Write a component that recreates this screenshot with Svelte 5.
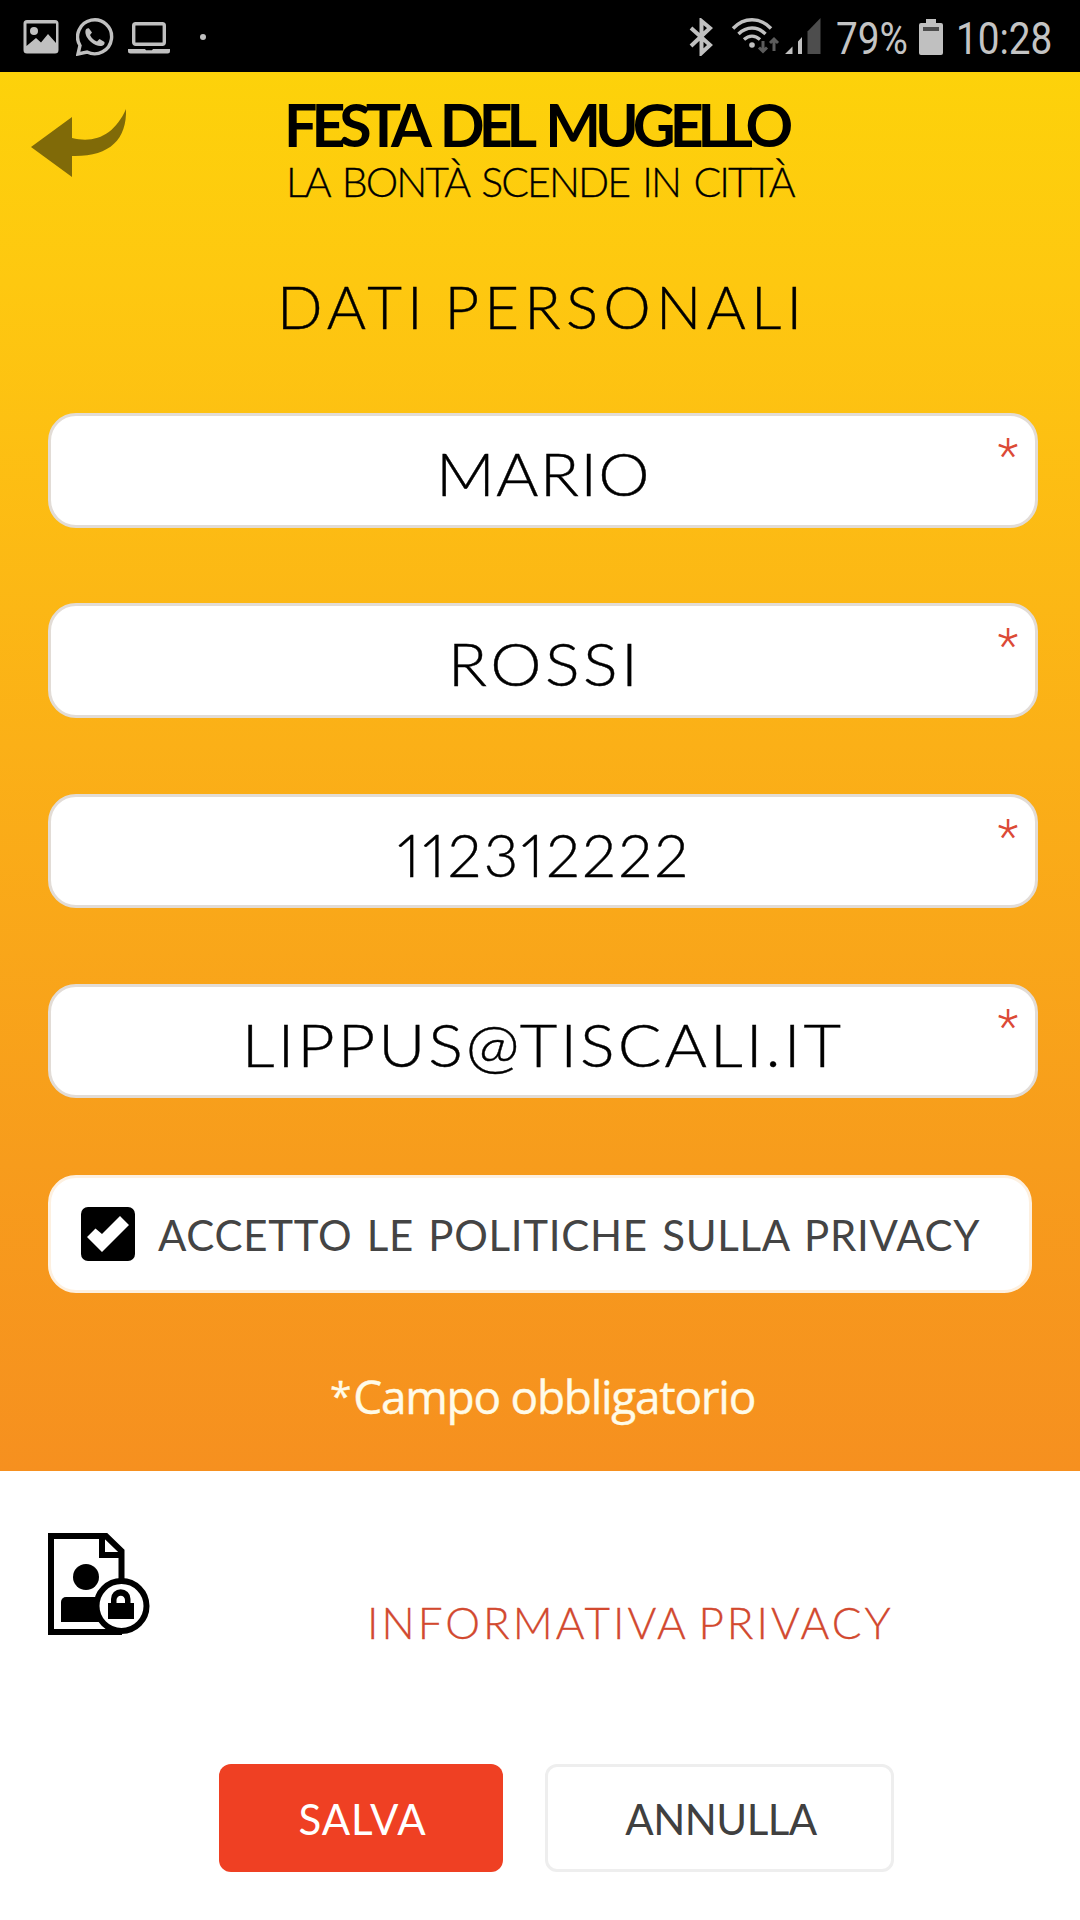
<script>
	let fields = [
		{ name: 'nome', value: 'MARIO' },
		{ name: 'cognome', value: 'ROSSI' },
		{ name: 'telefono', value: '112312222' },
		{ name: 'email', value: 'LIPPUS@TISCALI.IT' }
	];
	let accepted = true;

	function toggle() {
		accepted = !accepted;
	}
</script>

<div class="screen">
	<div class="status">
		<svg class="picture" width="36" height="34" viewBox="0 0 36 34">
			<path fill-rule="evenodd" d="M4 0H32a3.500 3.500 0 0 1 3.500 3.500V30a3.500 3.500 0 0 1-3.500 3.500H4A3.500 3.500 0 0 1 .5 30V3.500A3.500 3.500 0 0 1 4 0ZM3.500 3.500V26L13 18l5 4.500L25 14l8 9V3.500Z" />
			<circle cx="11" cy="11" r="4" />
		</svg>
		<svg class="whatsapp" width="38" height="38" viewBox="0 0 38 38">
			<path class="line" d="M2 36 4 27.500A17 17 0 1 1 11 34Z" />
			<path d="M13 10.500c-1-.5-3 0-3.500 2-.8 4 2 8.500 5.500 11.500s7.500 4.500 10.500 4c2-.3 3.500-2 3-4l-5-3-2.500 2.500c-3-1-5.500-3.500-7-6.500l2-2.500Z" />
		</svg>
		<svg class="laptop" width="42" height="32" viewBox="0 0 42 32">
			<rect class="line" x="5.700" y="1.700" width="30.600" height="20.600" rx="2" />
			<path d="M0 27H17l1 1.200h6L25 27H42v2a2.500 2.500 0 0 1-2.500 2.500h-37A2.500 2.500 0 0 1 0 29Z" />
		</svg>
		<i class="dot"></i>
		<svg class="bluetooth" width="24" height="38" viewBox="0 0 24 38">
			<path class="line thick" d="M2 10 21 27 12.500 35V3L21 10 2 28" />
		</svg>
		<svg class="wifi" width="50" height="38" viewBox="0 0 50 38">
			<path class="line" d="M2 10.500C13-1.200 29-1.200 40 10.500M7.500 16C15.500 8 26.500 8 34.500 16M13 21.500c5-4.500 11-4.500 16 0" />
			<circle cx="21" cy="27" r="2.800" />
			<path class="traffic" d="M32 23V33M28 29.500l4 4 4-4M43 33V21.500M39 25l4-4 4 4" />
		</svg>
		<svg class="signal" width="36" height="36" viewBox="0 0 36 36">
			<path d="M0 36 7.500 28.500V36ZM13 23.500 17 19V36H13Z" />
			<path class="off" d="M22.500 13.500 35.500 0V36H22.500Z" />
		</svg>
		<span class="percent">79%</span>
		<svg class="battery" width="24" height="36" viewBox="0 0 24 36">
			<path d="M7 0H17V4H22a2 2 0 0 1 2 2V34a2 2 0 0 1-2 2H2a2 2 0 0 1-2-2V6A2 2 0 0 1 2 4H7Z" />
			<path class="off" d="M4 8H20V12H4Z" />
		</svg>
		<span class="clock">10:28</span>
	</div>

	<div class="form">
		<header>
			<svg class="back" width="96" height="70" viewBox="0 0 96 70">
				<path d="M0 39 41 9V30C65 36 84 26 95 1 96 32 78 49 41 48V69Z" />
			</svg>
			<div class="brand">
				<h1>FESTA DEL MUGELLO</h1>
				<p>LA BONTÀ SCENDE IN CITTÀ</p>
			</div>
		</header>

		<h2>DATI PERSONALI</h2>

		{#each fields as field}
			<div class="field">
				<span class={field.name}>{field.value}</span>
				<sup>*</sup>
			</div>
		{/each}

		<button class="accept" on:click={toggle}>
			<svg width="54" height="54" viewBox="0 0 54 54">
				<rect width="54" height="54" rx="7" />
				{#if accepted}
					<path d="M6 30 14.500 21.500 21 27 39 9 48 18 21 45Z" />
				{/if}
			</svg>
			<span>ACCETTO LE POLITICHE SULLA PRIVACY</span>
		</button>

		<p class="required"><small>*</small>Campo obbligatorio</p>
	</div>

	<div class="privacy">
		<svg width="102" height="102" viewBox="0 0 102 102">
			<path class="page" d="M73.500 46V18L58 3H3V99H74" />
			<path class="page" d="M54 3V22H73" />
			<circle cx="38" cy="44" r="13" />
			<path d="M13 89V69a5 5 0 0 1 5-5H58V89Z" />
			<circle class="badge" cx="73.500" cy="73" r="25" />
			<path d="M60 70h3V66a9.700 9.700 0 0 1 19.500 0v4H86V86H60ZM68.500 70h8.500V67a4.200 4.200 0 0 0-8.500 0Z" fill-rule="evenodd" />
		</svg>
		<a href="#privacy">INFORMATIVA PRIVACY</a>
	</div>

	<div class="actions">
		<button class="save"><span>SALVA</span></button>
		<button class="cancel"><span>ANNULLA</span></button>
	</div>
</div>

<style>
	:global(body) {
		background: #fff;
	}

	.screen {
		width: 1080px;
		height: 1920px;
		overflow: hidden;
		font-family: Lato, "Liberation Sans", sans-serif;
		font-weight: 300;
		color: #000;
	}

	h1, h2, p {
		margin: 0;
		white-space: nowrap;
	}

	button {
		font: inherit;
		box-sizing: border-box;
		padding: 0;
	}

	span {
		white-space: nowrap;
	}

	/* status bar */
	.status {
		display: flex;
		align-items: flex-start;
		height: 72px;
		box-sizing: border-box;
		padding: 18px 0 0 23px;
		background: #000;
		color: #c4c4c4;
		font-family: Roboto, sans-serif;
		font-weight: 400;
		font-size: 45px;
		line-height: 38px;
	}

	.status svg {
		flex: none;
		fill: #c0c0c0;
	}

	.status .line {
		fill: none;
		stroke: #c0c0c0;
		stroke-width: 3.400;
	}

	.status .thick {
		stroke-width: 4;
	}

	.status .traffic {
		fill: none;
		stroke: #5c5c5c;
		stroke-width: 3;
	}

	.status .off {
		fill: #4d4d4d;
	}

	.picture { margin: 2px 17px 0 0; }
	.whatsapp { margin-right: 14px; }
	.laptop { margin: 4px 30px 0 0; }

	.dot {
		width: 6px;
		height: 6px;
		margin: 16px 483px 0 0;
		border-radius: 50%;
		background: #c0c0c0;
	}

	.bluetooth { margin-right: 18px; }
	.wifi { margin-right: 4px; }
	.signal { margin-right: 15px; }
	.battery { margin: 1px 13px 0 0; }

	.percent,
	.clock {
		transform: scaleX(.86);
		transform-origin: 0 0;
		padding-top: 2px;
	}

	.percent { width: 83px; }

	/* yellow part */
	.form {
		display: flex;
		flex-direction: column;
		height: 1399px;
		box-sizing: border-box;
		padding: 0 42px 0 48px;
		background: linear-gradient(#fdd20a, #fec810 15%, #fbb017 48%, #f79c1c 78%, #f6901f);
	}

	header {
		display: flex;
		height: 197px;
		margin-left: -17px;
	}

	.back {
		margin: 36px 159px 0 0;
		fill: #806a08;
	}

	h1 {
		margin: 16px 0 0 -2px;
		font-size: 59px;
		line-height: 74px;
		font-weight: 700;
		letter-spacing: -6px;
		word-spacing: 7.500px;
	}

	.brand p {
		font-size: 41px;
		line-height: 40px;
		letter-spacing: -1.900px;
		word-spacing: 4px;
		-webkit-text-stroke: .3px #000;
	}

	h2 {
		height: 144px;
		padding-left: 229px;
		font-size: 60px;
		line-height: 74px;
		font-weight: 300;
		letter-spacing: 5.200px;
		word-spacing: -5px;
		-webkit-text-stroke: .4px #000;
	}

	.field {
		position: relative;
		display: flex;
		justify-content: center;
		height: 114.500px;
		margin-bottom: 75.800px;
		box-sizing: border-box;
		border: 3px solid #e2dcd6;
		border-radius: 28px;
		background: #fff;
		font-size: 60px;
		line-height: 114px;
	}

	.field span {
		transform: scaleX(1.08);
		-webkit-text-stroke: .4px #000;
	}

	.field .nome {
		letter-spacing: 1.100px;
	}

	.field .cognome {
		margin-right: -3px;
		letter-spacing: 3.100px;
	}

	.field .telefono {
		font-variant-numeric: proportional-nums;
		margin-right: -2px;
		letter-spacing: 2.650px;
		transform: none;
	}

	.field .email {
		letter-spacing: 2.750px;
	}

	.field sup {
		position: absolute;
		top: 14px;
		right: 17px;
		color: #dc4a36;
		font-family: Roboto, sans-serif;
		font-size: 48px;
		line-height: 52px;
	}

	.accept {
		display: flex;
		align-items: center;
		width: 984px;
		height: 118px;
		margin-top: 1px;
		padding-left: 30px;
		border: 3px solid #fdf0e0;
		border-radius: 28px;
		background: #fff;
		color: #444;
		font-size: 42px;
		font-weight: 400;
		letter-spacing: .7px;
		word-spacing: 3px;
	}

	.accept span {
		padding-top: 2px;
	}

	.accept svg {
		flex: none;
		margin-right: 23px;
	}

	.accept path {
		fill: #fff;
	}

	.required {
		margin-top: 71px;
		padding-left: 282px;
		color: #fffbe8;
		font-family: "Open Sans", sans-serif;
		font-weight: 400;
		font-size: 46px;
		line-height: 64px;
		letter-spacing: -1.270px;
		-webkit-text-stroke: .4px #fffbe8;
	}

	.required small {
		margin-right: 3px;
		font-size: 39px;
		line-height: 1;
		vertical-align: 4px;
	}

	/* white part */
	.privacy {
		display: flex;
		height: 231px;
		padding: 62px 0 0 48px;
	}

	.privacy .page {
		fill: none;
		stroke: #000;
		stroke-width: 6;
	}

	.privacy .badge {
		fill: #fff;
		stroke: #000;
		stroke-width: 6;
	}

	a {
		margin: 62px 0 0 217px;
		height: 54px;
		color: #d2492f;
		font-size: 44px;
		line-height: 54px;
		letter-spacing: 3px;
		word-spacing: -4px;
		-webkit-text-stroke: .3px #d2492f;
		white-space: nowrap;
		text-decoration: none;
	}

	.actions {
		display: flex;
		gap: 42px;
		padding-left: 219px;
		font-size: 42px;
		font-weight: 400;
	}

	.actions button {
		height: 108px;
		padding: 2px 0 0 3px;
		border-radius: 12px;
	}

	.save {
		width: 284px;
		border: 0;
		background: #ef4023;
		color: #fff;
		letter-spacing: 1px;
	}

	.cancel {
		width: 349px;
		border: 3px solid #eee;
		background: #fff;
		color: #404040;
		letter-spacing: -.5px;
	}
</style>
